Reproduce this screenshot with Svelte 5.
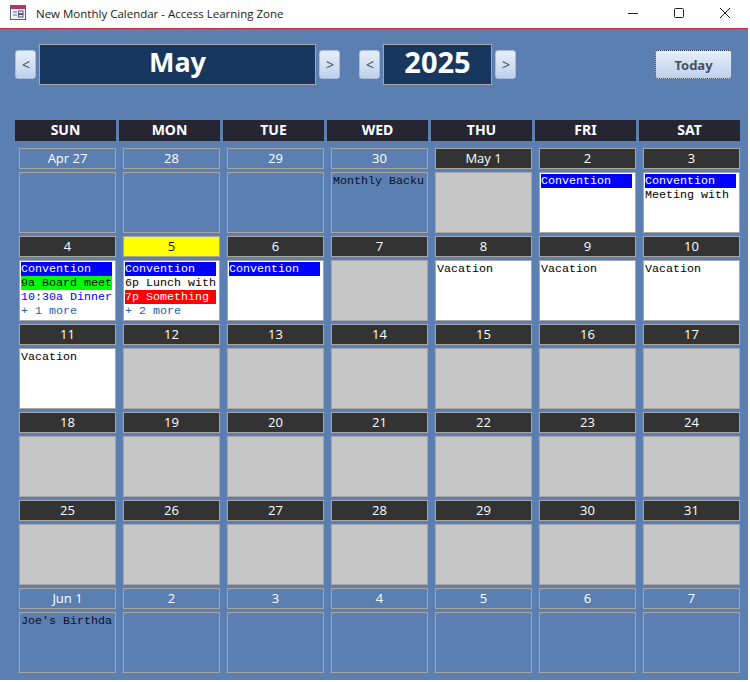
<script>
  const days = ['SUN', 'MON', 'TUE', 'WED', 'THU', 'FRI', 'SAT'];
  const b = (text) => ({ text, cls: 'blue' });
  const t = (text) => ({ text, cls: '' });
  const label = (d) => ({ d, kind: 'cur' });

  const cells = [
    { d: 'Apr 27', kind: 'out' }, { d: '28', kind: 'out' }, { d: '29', kind: 'out' },
    { d: '30', kind: 'out', ev: [{ text: 'Monthly Backu', cls: 'dark' }] },
    { d: 'May 1', kind: 'cur' },
    { d: '2', kind: 'cur', ev: [b('Convention')] },
    { d: '3', kind: 'cur', ev: [b('Convention'), t('Meeting with')] },
    { d: '4', kind: 'cur', ev: [b('Convention'), { text: '9a Board meet', cls: 'green' }, { text: '10:30a Dinner', cls: 'violet' }, { text: '+ 1 more', cls: 'more' }] },
    { d: '5', kind: 'today', ev: [b('Convention'), t('6p Lunch with'), { text: '7p Something', cls: 'red' }, { text: '+ 2 more', cls: 'more' }] },
    { d: '6', kind: 'cur', ev: [b('Convention')] },
    { d: '7', kind: 'cur' },
    { d: '8', kind: 'cur', ev: [t('Vacation')] },
    { d: '9', kind: 'cur', ev: [t('Vacation')] },
    { d: '10', kind: 'cur', ev: [t('Vacation')] },
    { d: '11', kind: 'cur', ev: [t('Vacation')] },
    ...Array.from({ length: 20 }, (_, i) => label(String(i + 12))),
    { d: 'Jun 1', kind: 'out', ev: [{ text: "Joe's Birthda", cls: 'dark' }] },
    ...['2', '3', '4', '5', '6', '7'].map((d) => ({ d, kind: 'out' }))
  ];
</script>

<div class="window">
  <header class="titlebar">
    <svg class="appicon" width="16" height="16" viewBox="0 0 16 16">
      <rect x="0.5" y="0.5" width="15" height="14" fill="#eef1f7" stroke="#5a5f7a" />
      <rect x="1" y="1" width="14" height="3" fill="#b5375f" />
      <path d="M3 7h4M3 10h4" stroke="#5a6a8a" fill="none" />
      <rect x="8.5" y="6" width="4.5" height="2.5" fill="none" stroke="#4a5a7a" />
      <rect x="8.5" y="9.5" width="4.5" height="2.5" fill="none" stroke="#4a5a7a" />
    </svg>
    <span class="title">New Monthly Calendar - Access Learning Zone</span>
    <div class="controls">
      <svg width="12" height="12" viewBox="0 0 12 12"><path d="M1 6.5h10" stroke="#222" fill="none" /></svg>
      <svg width="12" height="12" viewBox="0 0 12 12"><rect x="1.5" y="1.5" width="9" height="9" rx="1" stroke="#222" fill="none" /></svg>
      <svg width="12" height="12" viewBox="0 0 12 12"><path d="M1 1l10 10M11 1L1 11" stroke="#222" fill="none" /></svg>
    </div>
  </header>

  <main class="body">
    <div class="toolbar">
      <button class="nav">&lt;</button>
      <div class="month box">May</div>
      <button class="nav">&gt;</button>
      <button class="nav yearprev">&lt;</button>
      <div class="year box">2025</div>
      <button class="nav">&gt;</button>
      <button class="todaybtn">Today</button>
    </div>

    <div class="weekdays">
      {#each days as day}
        <div class="weekday">{day}</div>
      {/each}
    </div>

    <div class="grid">
      {#each cells as c}
        <div class="cell">
          <div class="date {c.kind}">{c.d}</div>
          <div class="events {c.kind} {c.ev ? 'has' : ''}">
            {#each c.ev ?? [] as e}
              <div class="event {e.cls}">{e.text}</div>
            {/each}
          </div>
        </div>
      {/each}
    </div>
  </main>
</div>

<style>
  :global(body) {
    margin: 0;
    background: #fff;
  }
  .window {
    width: 748px;
    height: 680px;
    display: flex;
    flex-direction: column;
    overflow: hidden;
    font-family: "Open Sans", "Noto Sans", sans-serif;
  }
  .titlebar {
    flex: none;
    background: #fff;
    display: flex;
    align-items: center;
    padding-left: 10px;
    padding-bottom: 2px;
    box-sizing: border-box;
    border-bottom: 1px solid #c8283c;
    height: 29px;
  }
  .appicon {
    flex: none;
  }
  .title {
    margin-left: 10px;
    font-size: 11.5px;
    color: #1a1a1a;
    font-family: "Open Sans", sans-serif;
  }
  .controls {
    margin-left: auto;
    display: flex;
    gap: 34px;
    margin-right: 17px;
  }
  .body {
    flex: 1;
    background: #5c7fb2;
    padding: 15px 8px 0 15px;
  }
  .toolbar {
    display: flex;
    align-items: center;
    height: 41px;
  }
  .nav {
    width: 21px;
    height: 29px;
    padding: 0 0 0 1px;
    border: 1px solid #a9bcd8;
    border-radius: 3px;
    background: linear-gradient(#e6eef9, #bfd1ec);
    color: #454c5c;
    font-family: "Open Sans", sans-serif;
    font-size: 14px;
    flex: none;
  }
  .box {
    background: #17375e;
    border: 1px solid #a6a6a6;
    box-sizing: border-box;
    height: 41px;
    color: #fff;
    font-weight: 700;
    font-family: "Noto Sans", sans-serif;
    font-size: 27px;
    line-height: 33px;
    text-align: center;
  }
  .month {
    width: 277px;
    margin: 0 3px;
  }
  .yearprev {
    margin-left: 19px;
  }
  .year {
    width: 109px;
    margin: 0 3px;
    font-size: 29px;
  }
  .todaybtn {
    margin-left: 139px;
    width: 77px;
    height: 29px;
    padding: 0;
    border: 1px dotted #1c2636;
    border-radius: 3px;
    background: linear-gradient(#e6eef9, #bfd1ec);
    color: #4a4f5c;
    font-family: "Noto Sans", sans-serif;
    font-weight: 700;
    font-size: 13px;
  }
  .weekdays {
    display: grid;
    grid-template-columns: repeat(7, 101px);
    column-gap: 3px;
    margin-top: 35px;
  }
  .weekday {
    height: 21px;
    background: #262633;
    color: #fff;
    font-weight: 700;
    font-size: 14px;
    line-height: 20px;
    text-align: center;
    font-family: "Noto Sans", sans-serif;
  }
  .grid {
    display: grid;
    grid-template-columns: repeat(7, 101px);
    column-gap: 3px;
    row-gap: 3px;
    margin-top: 7px;
  }
  .cell {
    padding-left: 4px;
    display: flex;
    flex-direction: column;
    gap: 3px;
  }
  .date {
    height: 21px;
    box-sizing: border-box;
    border: 1px solid #a6a6a6;
    color: #fff;
    font-size: 13px;
    line-height: 18px;
    text-align: center;
  }
  .date.out {
    background: transparent;
  }
  .date.cur {
    background: #333;
  }
  .date.today {
    background: #ff0;
    color: #111;
  }
  .events {
    height: 61px;
    box-sizing: border-box;
    border: 1px solid #a6a6a6;
    padding: 1px;
    overflow: hidden;
    font-family: "Liberation Mono", monospace;
    font-size: 11.67px;
    line-height: 14px;
  }
  .events.out {
    background: transparent;
  }
  .events.cur,
  .events.today {
    background: #c6c6c6;
  }
  .events.has.cur,
  .events.has.today {
    background: #fff;
  }
  .event {
    width: 91px;
    height: 14px;
    overflow: hidden;
    white-space: nowrap;
    color: #000;
  }
  .event.blue {
    background: #00f;
    color: #fff;
  }
  .event.green {
    background: #0f0;
  }
  .event.red {
    background: #f00;
    color: #fff;
  }
  .event.violet {
    color: #00f;
  }
  .event.more {
    color: #1f5fb0;
  }
  .event.dark {
    color: #0a0f2a;
  }
</style>
